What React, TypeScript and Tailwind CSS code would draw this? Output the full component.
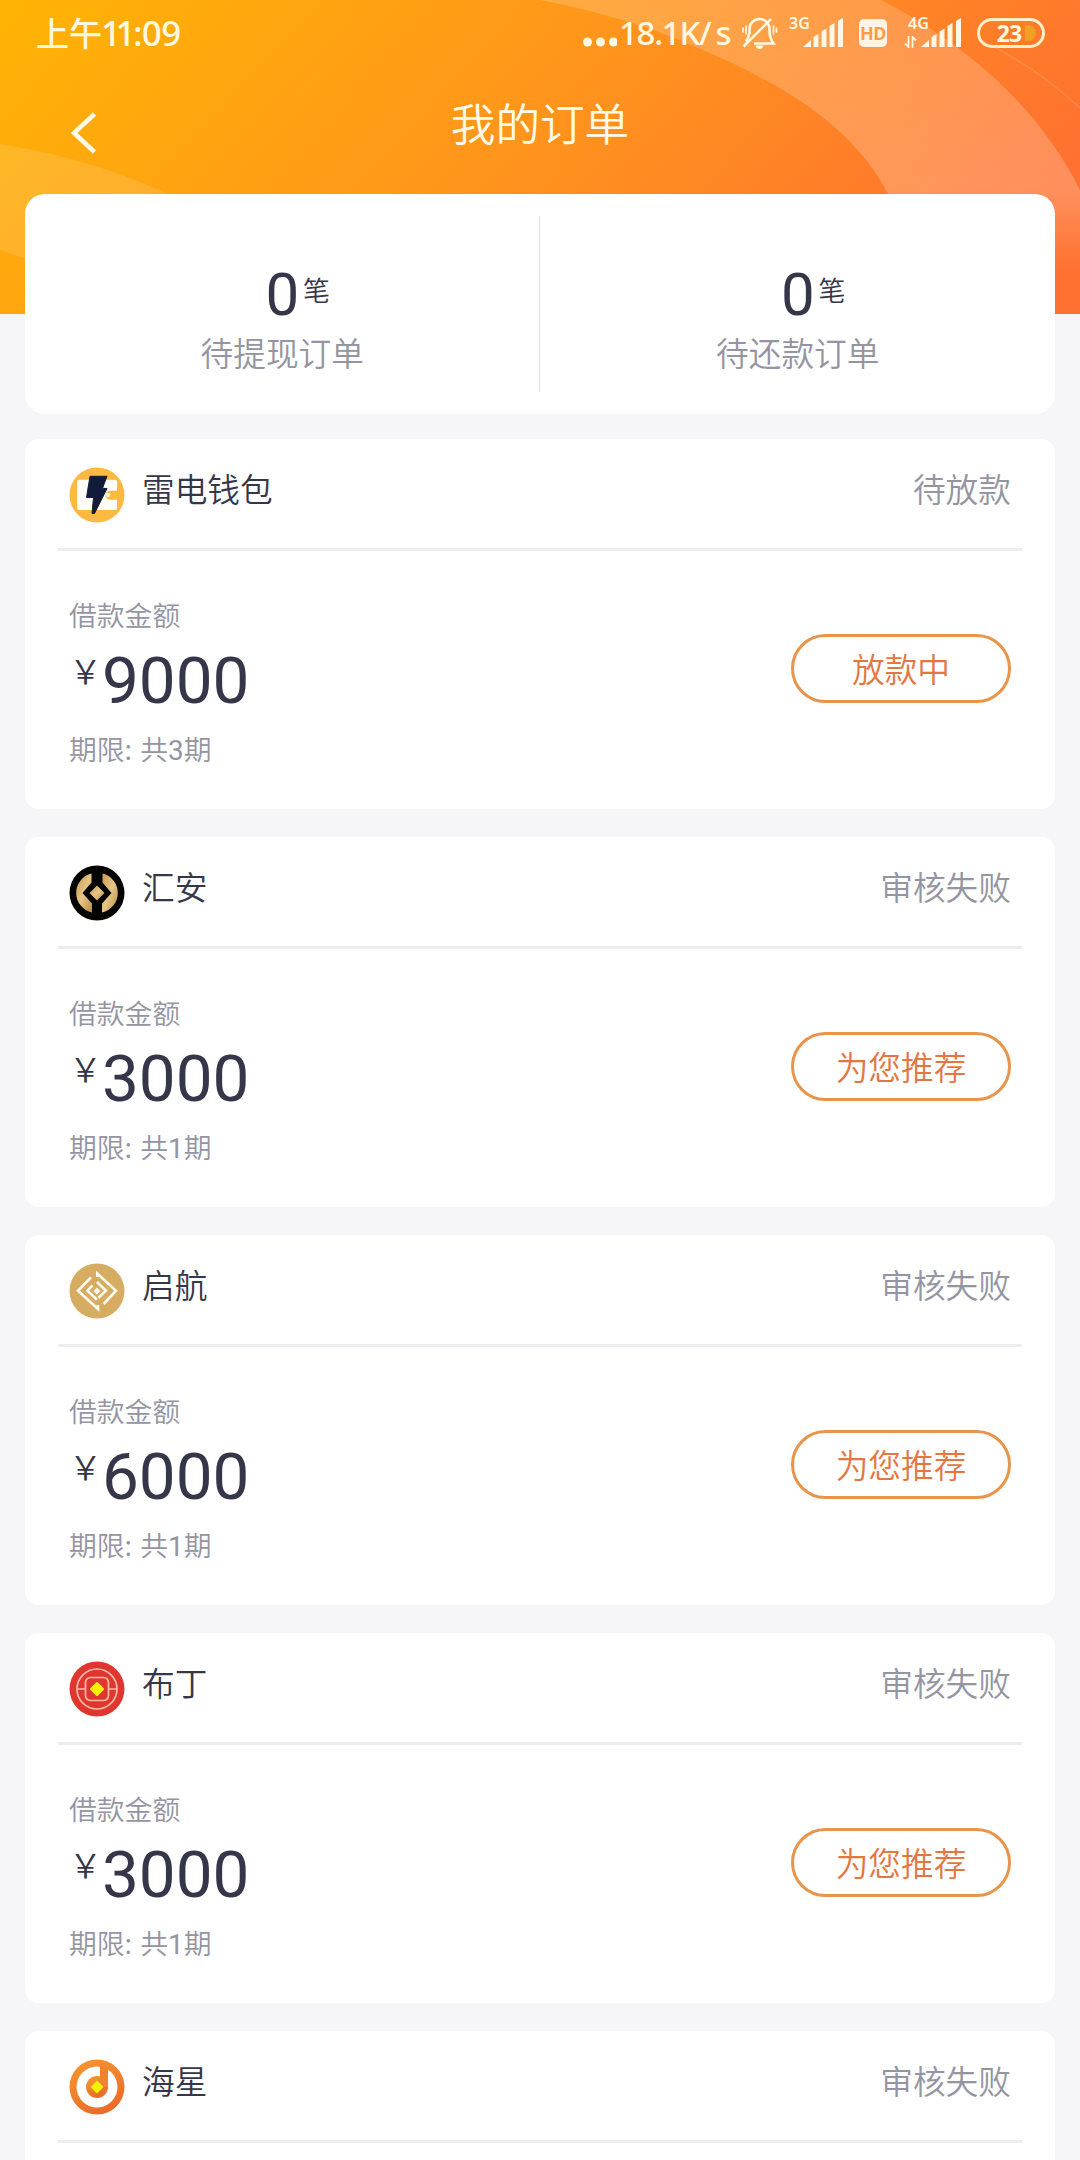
import React from 'react'

interface Order {
  id: number
  name: string
  logo: React.ReactNode
  status: string
  amount?: number
  periods?: number
  action?: string
}

function ThunderLogo() {
  return (
    <svg viewBox="0 0 56 56" className="w-14 h-14">
      <circle cx="28" cy="28" r="27.5" fill="#fdb940" />
      <path d="M10.5 12.700h35.500q2 0 2 2v9h-7a4.500 4.500 0 0 0 0 9h7V41q0 2-2 2H10.500q-2.500 0-2.500-2V14.700q0-2 2.500-2z" fill="#fffdf8" />
      <circle cx="39" cy="28" r="2.200" fill="#fff1d4" />
      <path d="M21 9.300h17l-4.500 12 4.500.2-12.500 25h-2.500l1.500-16h-7z" fill="#131b3a" stroke="#131b3a" strokeLinejoin="round" />
    </svg>
  )
}

function HuianLogo() {
  return (
    <svg viewBox="0 0 56 56" className="w-14 h-14">
      <defs>
        <linearGradient id="gold" x1="0" y1="0" x2="1" y2="1">
          <stop offset="0" stopColor="#c59a52" />
          <stop offset="0.500" stopColor="#e6c585" />
          <stop offset="1" stopColor="#b98c45" />
        </linearGradient>
      </defs>
      <circle cx="28" cy="28" r="27.500" fill="#050301" />
      <path d="M22.500 8.500v9L13.500 28l9.500 10.500v9A20 20 0 0 1 22.500 8.500z" fill="url(#gold)" />
      <path d="M33.500 8.500v9L42.500 28l-9.500 10.500v9A20 20 0 0 0 33.500 8.500z" fill="url(#gold)" />
      <path d="M28 20.500l7.500 7.500-7.500 7.500-7.500-7.500z" fill="url(#gold)" />
    </svg>
  )
}

function QihangLogo() {
  return (
    <svg viewBox="0 0 56 56" className="w-14 h-14">
      <circle cx="28" cy="28" r="27.500" fill="#d5ac62" />
      <g fill="none" stroke="#fffaf0" strokeWidth="2.600">
        <path d="M22 14.500L9 27.700l20 18.300v-4" />
        <path d="M28.300 14V10.500L47 27.700 34.600 41" />
        <path d="M28 19l9 8.700-7.500 7" />
        <path d="M23.500 22.500l-5 5.200 9.500 9" />
      </g>
      <path d="M28 24.500l3.500 3.500-3.500 3.500-3.500-3.500z" fill="#fffaf0" />
    </svg>
  )
}

function BudingLogo() {
  return (
    <svg viewBox="0 0 56 56" className="w-14 h-14">
      <circle cx="28" cy="28" r="27.500" fill="#df3730" />
      <g fill="none" stroke="#ffb9a6" strokeWidth="1.700">
        <circle cx="28" cy="28" r="20" />
        <rect x="16.500" y="16.500" width="23" height="23" rx="5" />
        <path d="M8 28h8.500M39.500 28H48" />
      </g>
      <path d="M28 22.500l5.500 5.500-5.500 5.500-5.500-5.500z" fill="#fdf000" stroke="#fdf000" strokeWidth="3" strokeLinejoin="round" />
    </svg>
  )
}

function HaixingLogo() {
  return (
    <svg viewBox="0 0 56 56" className="w-14 h-14">
      <defs>
        <linearGradient id="sea" x1="0" y1="0" x2="0.500" y2="1">
          <stop offset="0" stopColor="#f79a2e" />
          <stop offset="1" stopColor="#ea6c2b" />
        </linearGradient>
      </defs>
      <circle cx="28" cy="28" r="27.500" fill="url(#sea)" />
      <circle cx="28" cy="28" r="20.500" fill="#fff" />
      <circle cx="28" cy="28" r="11" fill="url(#sea)" />
      <path d="M31 6l8 3V28h-8z" fill="#ef8430" />
      <path d="M28 21.500l6.500 6.500-6.500 6.500-6.500-6.500z" fill="#f4f200" />
    </svg>
  )
}

const orders: Order[] = [
  { id: 1, name: '雷电钱包', logo: <ThunderLogo />, status: '待放款', amount: 9000, periods: 3, action: '放款中' },
  { id: 2, name: '汇安', logo: <HuianLogo />, status: '审核失败', amount: 3000, periods: 1, action: '为您推荐' },
  { id: 3, name: '启航', logo: <QihangLogo />, status: '审核失败', amount: 6000, periods: 1, action: '为您推荐' },
  { id: 4, name: '布丁', logo: <BudingLogo />, status: '审核失败', amount: 3000, periods: 1, action: '为您推荐' },
  { id: 5, name: '海星', logo: <HaixingLogo />, status: '审核失败' }
]

function HeaderBackground() {
  return (
    <svg viewBox="0 0 1080 314" className="absolute inset-0 w-full h-full">
      <defs>
        <linearGradient id="bg" gradientUnits="userSpaceOnUse" x1="0" y1="0" x2="700" y2="640">
          <stop offset="0" stopColor="#ffb404" />
          <stop offset="0.500" stopColor="#ff951c" />
          <stop offset="0.950" stopColor="#ff7130" />
        </linearGradient>
        <linearGradient id="band" gradientUnits="userSpaceOnUse" x1="0" y1="0" x2="0" y2="270">
          <stop offset="0" stopColor="#fff" stopOpacity="0.170" />
          <stop offset="0.700" stopColor="#fff" stopOpacity="0.220" />
          <stop offset="1" stopColor="#fff" stopOpacity="0" />
        </linearGradient>
      </defs>
      <rect width="1080" height="314" fill="url(#bg)" />
      <path d="M540 0C600 12 650 26 698 48C800 90 860 138 888 194L915 270H1080V190C1040 110 970 46 881 0z" fill="url(#band)" />
      <path d="M0 144Q90 158 168 194L240 230V300Q110 290 0 250z" fill="#fff" fillOpacity="0.120" />
      <path d="M985 42Q1040 70 1080 108" fill="none" stroke="#fff" strokeOpacity="0.120" strokeWidth="1.500" />
    </svg>
  )
}

function SignalBars() {
  return (
    <svg viewBox="0 0 41 30" className="w-[41px] h-[30px]" fill="#fff8e6">
      <path d="M0 29l8-7v7z" />
      <path d="M10.500 19l5-3v13h-5z" />
      <path d="M18.500 13.500l5-3V29h-5z" />
      <path d="M26.500 8l5-3v24h-5z" />
      <path d="M35 3l5-3v29h-5z" />
    </svg>
  )
}

function StatusBar() {
  return (
    <div className="relative flex h-[66px] pl-[36px] pr-[35px] text-[#fff8e0] font-['Noto_Sans_CJK_SC',sans-serif]">
      <div className="flex items-center h-[66px] whitespace-nowrap">
        <span className="text-[33px] font-medium">上午</span>
        <span className="text-[35px] font-medium font-['Noto_Sans',sans-serif]">
          <span className="-ml-px tracking-[-5.500px]">11</span>
          <span className="ml-[3px] tracking-[-0.700px]">:09</span>
        </span>
      </div>
      <div className="flex ml-auto">
        <svg viewBox="0 0 34 66" className="w-[34px] h-[66px] -ml-1" fill="#fff8e0">
          <circle cx="4.500" cy="42" r="4.500" />
          <circle cx="17.500" cy="42" r="4.500" />
          <circle cx="30.500" cy="42" r="4.500" />
        </svg>
        <span className="w-[127px] pl-[2px] leading-[66px] text-[33px] font-medium font-['Noto_Sans',sans-serif] whitespace-nowrap tracking-[-1.300px]">18.1K/<span className="ml-[5px]">s</span></span>
        <svg viewBox="0 0 36 34" className="w-[36px] h-[34px] mt-4 -ml-[2px] mr-[2px]" fill="none" stroke="#fff8e0" strokeWidth="2.600">
          <path d="M7.500 18v-5.500c0-5 4.500-9.500 10-9.500s10 4.500 10 9.500c0 7 .5 10 4 15H12" />
          <path d="M1.500 30.500L29 3" />
          <path d="M7 17.500c0 3-1 5-3 8" />
          <path d="M13.500 29.500h8q-1 3.500-4 3.500t-4-3.500z" fill="#fff8e0" stroke="none" />
          <path d="M4 9.500v9M1 11.500v5M31.500 9.500v9M34.500 11.500v5" strokeWidth="1.700" />
        </svg>
        <div className="relative ml-[9px] mt-[18px] w-[58px]">
          <span className="absolute left-0 top-[-3px] text-[16px] leading-[16px] font-semibold font-['Noto_Sans',sans-serif]">3G</span>
          <div className="ml-[14px]"><SignalBars /></div>
        </div>
        <span className="mt-[19px] ml-[12px] w-7 h-7 rounded-[5px] bg-[#fff5e6] text-[#ff9a4c] text-[18px] leading-7 font-bold text-center tracking-[-0.500px] font-['Noto_Sans',sans-serif]">HD</span>
        <div className="relative ml-[17px] mt-[18px] w-[58px]">
          <span className="absolute left-1 top-[-3px] text-[16px] leading-[16px] font-semibold font-['Noto_Sans',sans-serif]">4G</span>
          <svg viewBox="0 0 13 12" className="absolute left-0 top-[18px] w-[13px] h-3" fill="none" stroke="#fff8e0" strokeWidth="1.800">
            <path d="M4.500 0v11L1 7.500M8.500 12V1L12 4.500" />
          </svg>
          <div className="ml-[17px]"><SignalBars /></div>
        </div>
        <div className="relative flex items-center justify-center ml-[15px] mt-[18px] w-[68px] h-[30px] rounded-full border-[3px] border-[#fff0cc]">
          <span className="absolute right-[6px] w-[11px] h-4 rounded-r-full bg-[#f0a024]" />
          <span className="relative -left-[2px] text-[23px] leading-[24px] font-bold tracking-[-1px] font-['Noto_Sans',sans-serif]">23</span>
        </div>
      </div>
    </div>
  )
}

function SummaryItem({ count, label }: { count: number; label: string }) {
  return (
    <div className="flex-1 flex flex-col items-center pt-[65px]">
      <div className="flex pl-[31px]">
        <span className="font-['Roboto',sans-serif] font-normal text-[60px] leading-[71px] text-[#36364a]">{count}</span>
        <span className="ml-[4px] mt-[13px] text-[27px] leading-[36px] text-[#36364a]">笔</span>
      </div>
      <span className="-mt-[2px] text-[32.700px] leading-[48px] text-[#9494a2]">{label}</span>
    </div>
  )
}

function OrderCard({ order }: { order: Order }) {
  return (
    <div className="h-[370px] bg-white rounded-[14px] px-[33px] shrink-0">
      <div className="h-[112px] border-b-[3px] border-[#ededf0] flex pl-[10.500px] pr-[11px]">
        <div className="mt-[27.500px]">{order.logo}</div>
        <span className="ml-[17.500px] mt-[25px] text-[32.700px] leading-[48px] text-[#36364a]">{order.name}</span>
        <span className="ml-auto mt-[25px] text-[32.700px] leading-[48px] text-[#9494a2]">{order.status}</span>
      </div>
      {order.amount !== undefined && (
        <div className="flex justify-between px-[11px]">
          <div className="pt-[43px]">
            <div className="text-[27.800px] leading-[40px] text-[#9494a2]">借款金额</div>
            <div className="flex h-[78px] text-[#36364a]">
              <span className="w-[33px] mt-[18px] text-[33px] leading-[36px]">￥</span>
              <span className="font-['Roboto',sans-serif] font-normal text-[65.600px] leading-[94px]">{order.amount}</span>
            </div>
            <div className="mt-[16px] text-[27.800px] leading-[40px] text-[#9494a2]">
              期限: <span className="ml-[2px]">共</span>
              <span className="font-['Roboto',sans-serif] font-normal">{order.periods}</span>期
            </div>
          </div>
          <button className="mt-[83px] w-[220px] h-[69px] rounded-full border-[3px] border-[#e8944a] text-[32.700px] leading-[58px] text-[#e27742]">
            <span className="relative -top-px">{order.action}</span>
          </button>
        </div>
      )}
    </div>
  )
}

export default function App() {
  return (
    <div className="relative w-[1080px] h-[2160px] overflow-hidden bg-[#f6f6f8] font-[350] font-['Noto_Sans_CJK_SC',sans-serif]">
      <div className="absolute top-0 left-0 w-full h-[314px]">
        <HeaderBackground />
      </div>
      <StatusBar />
      <div className="relative h-32 flex justify-center">
        <button className="absolute left-[69px] top-[46px]">
          <svg viewBox="0 0 28 42" className="w-7 h-[42px]" fill="none" stroke="#fffbe8" strokeWidth="4.500">
            <path d="M25.500 2L5 21l20.500 19" />
          </svg>
        </button>
        <h1 className="mt-[24px] text-[44.600px] leading-[64px] text-[#fffbe8]">我的订单</h1>
      </div>
      <div className="relative mx-[25px] flex flex-col">
        <div className="flex h-[220px] bg-white rounded-[20px] mb-[25px]">
          <SummaryItem count={0} label="待提现订单" />
          <div className="w-px h-[176px] mt-[22px] -ml-px mr-px bg-[#dedee2]" />
          <SummaryItem count={0} label="待还款订单" />
        </div>
        <div className="flex flex-col gap-7">
          {orders.map((order) => (
            <OrderCard key={order.id} order={order} />
          ))}
        </div>
      </div>
    </div>
  )
}
